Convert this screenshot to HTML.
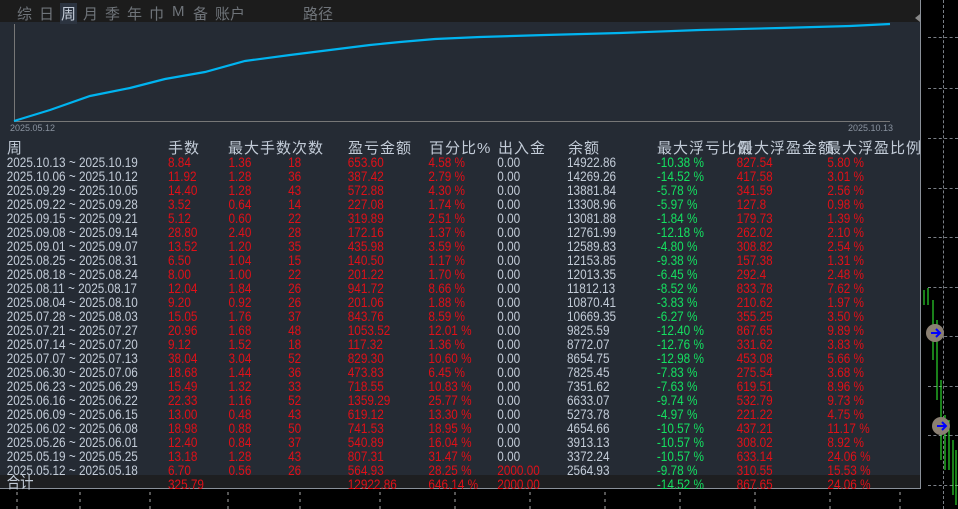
<!DOCTYPE html>
<html><head><meta charset="utf-8"><style>
body{margin:0;width:958px;height:509px;background:#000;position:relative;overflow:hidden;font-family:"Liberation Sans","Noto Sans CJK SC",sans-serif}
.p{position:absolute;left:0;top:0;width:920px;height:488px;background:#252b34;border-right:1px solid #8a9099;border-bottom:1px solid #8a9099}
.top{position:absolute;left:0;top:0;width:920px;height:22px;background:#1c1c1c}
.tab{position:absolute;top:3px;font-size:15px;color:#6f747a}
.tot{position:absolute;left:0;top:475px;width:920px;height:13px;background:#1e1f21}
.r{position:absolute;left:0;height:14px;width:1100px;font-size:14px;line-height:14px;transform:scaleX(.84);transform-origin:0 0;white-space:nowrap}
.r span{position:absolute;top:0}
.w{color:#c3ccd8}.d{color:#e01018}.g{color:#14e060}
.h{position:absolute;top:137px;font-size:15px;color:#c3ccd8;white-space:nowrap;letter-spacing:1px}
.hl{position:absolute;left:928px;height:0;width:30px;border-top:1px dashed #7a7f86}
</style></head><body>
<div class="hl" style="top:37px"></div><div class="hl" style="top:88px"></div><div class="hl" style="top:138px"></div><div class="hl" style="top:188px"></div><div class="hl" style="top:237px"></div><div class="hl" style="top:287px"></div><div class="hl" style="top:336px"></div><div class="hl" style="top:386px"></div><div class="hl" style="top:435px"></div><div class="hl" style="top:485px"></div>
<div style="position:absolute;left:943px;top:0;height:509px;border-left:1px dashed #7a7f86"></div>
<svg style="position:absolute;left:0;top:0" width="958" height="509">
<g stroke="#3f3" stroke-width="1"><line x1="924" y1="290" x2="924" y2="305"/><line x1="928" y1="288" x2="928" y2="305"/><line x1="933" y1="300" x2="933" y2="360"/><line x1="937" y1="320" x2="937" y2="400"/><line x1="941" y1="380" x2="941" y2="460"/><line x1="945" y1="415" x2="945" y2="470"/><line x1="949" y1="420" x2="949" y2="470"/><line x1="953" y1="440" x2="953" y2="495"/><line x1="956" y1="450" x2="956" y2="505"/></g>
<circle cx="935" cy="333" r="9" fill="#8a7f72"/><circle cx="941" cy="426" r="9" fill="#8a7f72"/>
<path d="M931 333h8M936 329l4 4-4 4M937 426h8M942 422l4 4-4 4" stroke="#00f" stroke-width="2" fill="none"/>
<g stroke="#aaa" stroke-dasharray="3,4"><line x1="17" y1="492" x2="17" y2="509"/><line x1="80" y1="492" x2="80" y2="509"/><line x1="150" y1="492" x2="150" y2="509"/><line x1="228" y1="492" x2="228" y2="509"/><line x1="300" y1="492" x2="300" y2="509"/><line x1="380" y1="492" x2="380" y2="509"/><line x1="455" y1="492" x2="455" y2="509"/><line x1="530" y1="492" x2="530" y2="509"/><line x1="605" y1="492" x2="605" y2="509"/><line x1="680" y1="492" x2="680" y2="509"/><line x1="755" y1="492" x2="755" y2="509"/><line x1="830" y1="492" x2="830" y2="509"/><line x1="900" y1="492" x2="900" y2="509"/></g>
</svg>
<div class="p"></div>
<div class="top"></div>
<div class="tab" style="left:17px">综</div><div class="tab" style="left:39px">日</div>
<div class="tab" style="left:60px;background:#2c3440;color:#c3ccd8;padding:0 1px">周</div>
<div class="tab" style="left:83px">月</div><div class="tab" style="left:105px">季</div><div class="tab" style="left:127px">年</div><div class="tab" style="left:149px">巾</div><div class="tab" style="left:172px">M</div><div class="tab" style="left:193px">备</div><div class="tab" style="left:215px">账户</div><div class="tab" style="left:303px">路径</div>
<svg style="position:absolute;left:0;top:0" width="920" height="135">
<line x1="14.5" y1="24" x2="14.5" y2="122" stroke="#777"/><line x1="14" y1="121.5" x2="890" y2="121.5" stroke="#777"/>
<polyline fill="none" stroke="#00b4f0" stroke-width="2.2" points="14,121 50,110 90,96 130,88 165,79 205,72 245,61 290,55 330,50 370,45 400,42 435,39 480,37 545,35 620,33 700,30 780,28 850,26 890,24"/>
<polygon points="920,14 915,18 920,22" fill="#888"/>
<text x="10" y="131" font-size="9" fill="#8a93a0" font-family="Liberation Sans">2025.05.12</text>
<text x="848" y="131" font-size="9" fill="#8a93a0" font-family="Liberation Sans">2025.10.13</text>
</svg>
<div class="tot"></div>
<div class="h" style="left:7px">周</div><div class="h" style="left:168px">手数</div><div class="h" style="left:228px">最大手数次数</div><div class="h" style="left:348px">盈亏金额</div><div class="h" style="left:429px">百分比%</div><div class="h" style="left:498px">出入金</div><div class="h" style="left:568px">余额</div><div class="h" style="left:657px">最大浮亏比例</div><div class="h" style="left:738px">最大浮盈金额</div><div class="h" style="left:826px">最大浮盈比例</div>
<div style="position:absolute;left:0;top:155px">
<div class="r" style="top:0px"><span class="w" style="left:8px">2025.10.13 ~ 2025.10.19</span><span class="d" style="left:200px">8.84</span><span class="d" style="left:272px">1.36</span><span class="d" style="left:343px">18</span><span class="d" style="left:414px">653.60</span><span class="d" style="left:510px">4.58 %</span><span class="w" style="left:592px">0.00</span><span class="w" style="left:675px">14922.86</span><span class="g" style="left:782px">-10.38 %</span><span class="d" style="left:877px">827.54</span><span class="d" style="left:985px">5.80 %</span></div>
<div class="r" style="top:14px"><span class="w" style="left:8px">2025.10.06 ~ 2025.10.12</span><span class="d" style="left:200px">11.92</span><span class="d" style="left:272px">1.28</span><span class="d" style="left:343px">36</span><span class="d" style="left:414px">387.42</span><span class="d" style="left:510px">2.79 %</span><span class="w" style="left:592px">0.00</span><span class="w" style="left:675px">14269.26</span><span class="g" style="left:782px">-14.52 %</span><span class="d" style="left:877px">417.58</span><span class="d" style="left:985px">3.01 %</span></div>
<div class="r" style="top:28px"><span class="w" style="left:8px">2025.09.29 ~ 2025.10.05</span><span class="d" style="left:200px">14.40</span><span class="d" style="left:272px">1.28</span><span class="d" style="left:343px">43</span><span class="d" style="left:414px">572.88</span><span class="d" style="left:510px">4.30 %</span><span class="w" style="left:592px">0.00</span><span class="w" style="left:675px">13881.84</span><span class="g" style="left:782px">-5.78 %</span><span class="d" style="left:877px">341.59</span><span class="d" style="left:985px">2.56 %</span></div>
<div class="r" style="top:42px"><span class="w" style="left:8px">2025.09.22 ~ 2025.09.28</span><span class="d" style="left:200px">3.52</span><span class="d" style="left:272px">0.64</span><span class="d" style="left:343px">14</span><span class="d" style="left:414px">227.08</span><span class="d" style="left:510px">1.74 %</span><span class="w" style="left:592px">0.00</span><span class="w" style="left:675px">13308.96</span><span class="g" style="left:782px">-5.97 %</span><span class="d" style="left:877px">127.8</span><span class="d" style="left:985px">0.98 %</span></div>
<div class="r" style="top:56px"><span class="w" style="left:8px">2025.09.15 ~ 2025.09.21</span><span class="d" style="left:200px">5.12</span><span class="d" style="left:272px">0.60</span><span class="d" style="left:343px">22</span><span class="d" style="left:414px">319.89</span><span class="d" style="left:510px">2.51 %</span><span class="w" style="left:592px">0.00</span><span class="w" style="left:675px">13081.88</span><span class="g" style="left:782px">-1.84 %</span><span class="d" style="left:877px">179.73</span><span class="d" style="left:985px">1.39 %</span></div>
<div class="r" style="top:70px"><span class="w" style="left:8px">2025.09.08 ~ 2025.09.14</span><span class="d" style="left:200px">28.80</span><span class="d" style="left:272px">2.40</span><span class="d" style="left:343px">28</span><span class="d" style="left:414px">172.16</span><span class="d" style="left:510px">1.37 %</span><span class="w" style="left:592px">0.00</span><span class="w" style="left:675px">12761.99</span><span class="g" style="left:782px">-12.18 %</span><span class="d" style="left:877px">262.02</span><span class="d" style="left:985px">2.10 %</span></div>
<div class="r" style="top:84px"><span class="w" style="left:8px">2025.09.01 ~ 2025.09.07</span><span class="d" style="left:200px">13.52</span><span class="d" style="left:272px">1.20</span><span class="d" style="left:343px">35</span><span class="d" style="left:414px">435.98</span><span class="d" style="left:510px">3.59 %</span><span class="w" style="left:592px">0.00</span><span class="w" style="left:675px">12589.83</span><span class="g" style="left:782px">-4.80 %</span><span class="d" style="left:877px">308.82</span><span class="d" style="left:985px">2.54 %</span></div>
<div class="r" style="top:98px"><span class="w" style="left:8px">2025.08.25 ~ 2025.08.31</span><span class="d" style="left:200px">6.50</span><span class="d" style="left:272px">1.04</span><span class="d" style="left:343px">15</span><span class="d" style="left:414px">140.50</span><span class="d" style="left:510px">1.17 %</span><span class="w" style="left:592px">0.00</span><span class="w" style="left:675px">12153.85</span><span class="g" style="left:782px">-9.38 %</span><span class="d" style="left:877px">157.38</span><span class="d" style="left:985px">1.31 %</span></div>
<div class="r" style="top:112px"><span class="w" style="left:8px">2025.08.18 ~ 2025.08.24</span><span class="d" style="left:200px">8.00</span><span class="d" style="left:272px">1.00</span><span class="d" style="left:343px">22</span><span class="d" style="left:414px">201.22</span><span class="d" style="left:510px">1.70 %</span><span class="w" style="left:592px">0.00</span><span class="w" style="left:675px">12013.35</span><span class="g" style="left:782px">-6.45 %</span><span class="d" style="left:877px">292.4</span><span class="d" style="left:985px">2.48 %</span></div>
<div class="r" style="top:126px"><span class="w" style="left:8px">2025.08.11 ~ 2025.08.17</span><span class="d" style="left:200px">12.04</span><span class="d" style="left:272px">1.84</span><span class="d" style="left:343px">26</span><span class="d" style="left:414px">941.72</span><span class="d" style="left:510px">8.66 %</span><span class="w" style="left:592px">0.00</span><span class="w" style="left:675px">11812.13</span><span class="g" style="left:782px">-8.52 %</span><span class="d" style="left:877px">833.78</span><span class="d" style="left:985px">7.62 %</span></div>
<div class="r" style="top:140px"><span class="w" style="left:8px">2025.08.04 ~ 2025.08.10</span><span class="d" style="left:200px">9.20</span><span class="d" style="left:272px">0.92</span><span class="d" style="left:343px">26</span><span class="d" style="left:414px">201.06</span><span class="d" style="left:510px">1.88 %</span><span class="w" style="left:592px">0.00</span><span class="w" style="left:675px">10870.41</span><span class="g" style="left:782px">-3.83 %</span><span class="d" style="left:877px">210.62</span><span class="d" style="left:985px">1.97 %</span></div>
<div class="r" style="top:154px"><span class="w" style="left:8px">2025.07.28 ~ 2025.08.03</span><span class="d" style="left:200px">15.05</span><span class="d" style="left:272px">1.76</span><span class="d" style="left:343px">37</span><span class="d" style="left:414px">843.76</span><span class="d" style="left:510px">8.59 %</span><span class="w" style="left:592px">0.00</span><span class="w" style="left:675px">10669.35</span><span class="g" style="left:782px">-6.27 %</span><span class="d" style="left:877px">355.25</span><span class="d" style="left:985px">3.50 %</span></div>
<div class="r" style="top:168px"><span class="w" style="left:8px">2025.07.21 ~ 2025.07.27</span><span class="d" style="left:200px">20.96</span><span class="d" style="left:272px">1.68</span><span class="d" style="left:343px">48</span><span class="d" style="left:414px">1053.52</span><span class="d" style="left:510px">12.01 %</span><span class="w" style="left:592px">0.00</span><span class="w" style="left:675px">9825.59</span><span class="g" style="left:782px">-12.40 %</span><span class="d" style="left:877px">867.65</span><span class="d" style="left:985px">9.89 %</span></div>
<div class="r" style="top:182px"><span class="w" style="left:8px">2025.07.14 ~ 2025.07.20</span><span class="d" style="left:200px">9.12</span><span class="d" style="left:272px">1.52</span><span class="d" style="left:343px">18</span><span class="d" style="left:414px">117.32</span><span class="d" style="left:510px">1.36 %</span><span class="w" style="left:592px">0.00</span><span class="w" style="left:675px">8772.07</span><span class="g" style="left:782px">-12.76 %</span><span class="d" style="left:877px">331.62</span><span class="d" style="left:985px">3.83 %</span></div>
<div class="r" style="top:196px"><span class="w" style="left:8px">2025.07.07 ~ 2025.07.13</span><span class="d" style="left:200px">38.04</span><span class="d" style="left:272px">3.04</span><span class="d" style="left:343px">52</span><span class="d" style="left:414px">829.30</span><span class="d" style="left:510px">10.60 %</span><span class="w" style="left:592px">0.00</span><span class="w" style="left:675px">8654.75</span><span class="g" style="left:782px">-12.98 %</span><span class="d" style="left:877px">453.08</span><span class="d" style="left:985px">5.66 %</span></div>
<div class="r" style="top:210px"><span class="w" style="left:8px">2025.06.30 ~ 2025.07.06</span><span class="d" style="left:200px">18.68</span><span class="d" style="left:272px">1.44</span><span class="d" style="left:343px">36</span><span class="d" style="left:414px">473.83</span><span class="d" style="left:510px">6.45 %</span><span class="w" style="left:592px">0.00</span><span class="w" style="left:675px">7825.45</span><span class="g" style="left:782px">-7.83 %</span><span class="d" style="left:877px">275.54</span><span class="d" style="left:985px">3.68 %</span></div>
<div class="r" style="top:224px"><span class="w" style="left:8px">2025.06.23 ~ 2025.06.29</span><span class="d" style="left:200px">15.49</span><span class="d" style="left:272px">1.32</span><span class="d" style="left:343px">33</span><span class="d" style="left:414px">718.55</span><span class="d" style="left:510px">10.83 %</span><span class="w" style="left:592px">0.00</span><span class="w" style="left:675px">7351.62</span><span class="g" style="left:782px">-7.63 %</span><span class="d" style="left:877px">619.51</span><span class="d" style="left:985px">8.96 %</span></div>
<div class="r" style="top:238px"><span class="w" style="left:8px">2025.06.16 ~ 2025.06.22</span><span class="d" style="left:200px">22.33</span><span class="d" style="left:272px">1.16</span><span class="d" style="left:343px">52</span><span class="d" style="left:414px">1359.29</span><span class="d" style="left:510px">25.77 %</span><span class="w" style="left:592px">0.00</span><span class="w" style="left:675px">6633.07</span><span class="g" style="left:782px">-9.74 %</span><span class="d" style="left:877px">532.79</span><span class="d" style="left:985px">9.73 %</span></div>
<div class="r" style="top:252px"><span class="w" style="left:8px">2025.06.09 ~ 2025.06.15</span><span class="d" style="left:200px">13.00</span><span class="d" style="left:272px">0.48</span><span class="d" style="left:343px">43</span><span class="d" style="left:414px">619.12</span><span class="d" style="left:510px">13.30 %</span><span class="w" style="left:592px">0.00</span><span class="w" style="left:675px">5273.78</span><span class="g" style="left:782px">-4.97 %</span><span class="d" style="left:877px">221.22</span><span class="d" style="left:985px">4.75 %</span></div>
<div class="r" style="top:266px"><span class="w" style="left:8px">2025.06.02 ~ 2025.06.08</span><span class="d" style="left:200px">18.98</span><span class="d" style="left:272px">0.88</span><span class="d" style="left:343px">50</span><span class="d" style="left:414px">741.53</span><span class="d" style="left:510px">18.95 %</span><span class="w" style="left:592px">0.00</span><span class="w" style="left:675px">4654.66</span><span class="g" style="left:782px">-10.57 %</span><span class="d" style="left:877px">437.21</span><span class="d" style="left:985px">11.17 %</span></div>
<div class="r" style="top:280px"><span class="w" style="left:8px">2025.05.26 ~ 2025.06.01</span><span class="d" style="left:200px">12.40</span><span class="d" style="left:272px">0.84</span><span class="d" style="left:343px">37</span><span class="d" style="left:414px">540.89</span><span class="d" style="left:510px">16.04 %</span><span class="w" style="left:592px">0.00</span><span class="w" style="left:675px">3913.13</span><span class="g" style="left:782px">-10.57 %</span><span class="d" style="left:877px">308.02</span><span class="d" style="left:985px">8.92 %</span></div>
<div class="r" style="top:294px"><span class="w" style="left:8px">2025.05.19 ~ 2025.05.25</span><span class="d" style="left:200px">13.18</span><span class="d" style="left:272px">1.28</span><span class="d" style="left:343px">43</span><span class="d" style="left:414px">807.31</span><span class="d" style="left:510px">31.47 %</span><span class="w" style="left:592px">0.00</span><span class="w" style="left:675px">3372.24</span><span class="g" style="left:782px">-10.57 %</span><span class="d" style="left:877px">633.14</span><span class="d" style="left:985px">24.06 %</span></div>
<div class="r" style="top:308px"><span class="w" style="left:8px">2025.05.12 ~ 2025.05.18</span><span class="d" style="left:200px">6.70</span><span class="d" style="left:272px">0.56</span><span class="d" style="left:343px">26</span><span class="d" style="left:414px">564.93</span><span class="d" style="left:510px">28.25 %</span><span class="d" style="left:592px">2000.00</span><span class="w" style="left:675px">2564.93</span><span class="g" style="left:782px">-9.78 %</span><span class="d" style="left:877px">310.55</span><span class="d" style="left:985px">15.53 %</span></div>
<div class="r" style="top:322px"><span class="w" style="left:8px;font-size:16px">合计</span><span class="d" style="left:200px">325.79</span><span class="d" style="left:414px">12922.86</span><span class="d" style="left:510px">646.14 %</span><span class="d" style="left:592px">2000.00</span><span class="g" style="left:782px">-14.52 %</span><span class="d" style="left:877px">867.65</span><span class="d" style="left:985px">24.06 %</span></div>
</div>
</body></html>
